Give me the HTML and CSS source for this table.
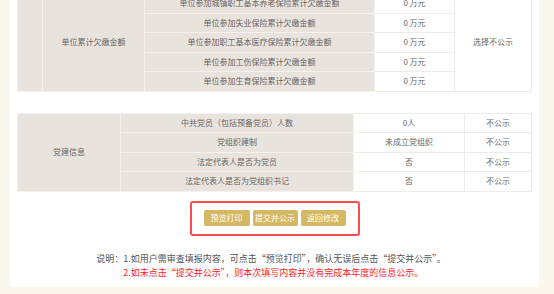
FILE: index.html
```html
<!DOCTYPE html>
<html lang="zh-CN">
<head>
<meta charset="utf-8">
<title>年度报告公示预览</title>
<link rel="stylesheet" href="styles.css">
</head>
<body>
<div class="panel">
  <table class="grid grid-arrears">
    <colgroup>
      <col class="c-blank"><col class="c-group"><col class="c-item"><col class="c-value"><col class="c-public">
    </colgroup>
    <tr>
      <td class="head" rowspan="5"></td>
      <td class="head" rowspan="5">单位累计欠缴金额</td>
      <td class="head">单位参加城镇职工基本养老保险累计欠缴金额</td>
      <td>0 万元</td>
      <td rowspan="5">选择不公示</td>
    </tr>
    <tr><td class="head">单位参加失业保险累计欠缴金额</td><td>0 万元</td></tr>
    <tr><td class="head">单位参加职工基本医疗保险累计欠缴金额</td><td>0 万元</td></tr>
    <tr><td class="head">单位参加工伤保险累计欠缴金额</td><td>0 万元</td></tr>
    <tr><td class="head">单位参加生育保险累计欠缴金额</td><td>0 万元</td></tr>
  </table>

  <table class="grid grid-party">
    <colgroup>
      <col class="p-group"><col class="p-item"><col class="p-value"><col class="p-public">
    </colgroup>
    <tr>
      <td class="head" rowspan="4">党建信息</td>
      <td class="head">中共党员（包括预备党员）人数</td>
      <td>0人</td>
      <td>不公示</td>
    </tr>
    <tr><td class="head">党组织建制</td><td>未成立党组织</td><td>不公示</td></tr>
    <tr><td class="head">法定代表人是否为党员</td><td>否</td><td>不公示</td></tr>
    <tr><td class="head">法定代表人是否为党组织书记</td><td>否</td><td>不公示</td></tr>
  </table>

  <div class="actions-wrap">
    <div class="actions">
      <button class="btn" type="button">预览打印</button>
      <button class="btn" type="button">提交并公示</button>
      <button class="btn" type="button">返回修改</button>
    </div>
  </div>

  <div class="note">
    <span class="note-label">说明：</span>
    <div class="note-lines">
      <p>1.如用户需审查填报内容，可点击“预览打印”，确认无误后点击“提交并公示”。</p>
      <p class="warn">2.如未点击“提交并公示”，则本次填写内容并没有完成本年度的信息公示。</p>
    </div>
  </div>
</div>
</body>
</html>
```

FILE: styles.css
```css
html, body {
  margin: 0;
  padding: 0;
  background: #f9f6ee;
  font-family: "Noto Sans CJK SC", "Noto Sans", sans-serif;
  overflow: hidden;
}

.panel {
  width: 529px;
  margin: -7px 0 0 10px;
  padding: 0 8px 7px 7px;
  box-sizing: border-box;
  background: #ffffff;
  border-radius: 0 0 4px 4px;
}

.grid {
  width: 514px;
  border-collapse: collapse;
  table-layout: fixed;
  font-size: 8px;
  color: #666666;
}

.grid td {
  height: 18.5px;
  padding: 0;
  border: 1px solid #efedea;
  text-align: center;
  vertical-align: middle;
  line-height: 10px;
  white-space: nowrap;
  background: #ffffff;
}

.grid td.head {
  background: #e9e3dd;
  border-color: #f4f1ee;
}

.c-blank { width: 25px; }
.c-group { width: 102px; }
.c-item { width: 230px; }
.c-value { width: 80px; }
.c-public { width: 77px; }

.grid-party { margin-top: 21px; }
.p-group { width: 103px; }
.p-item { width: 233px; }
.p-value { width: 111px; }
.p-public { width: 67px; }

.actions-wrap {
  display: flex;
  justify-content: center;
  margin-top: 9px;
  padding-left: 1px;
}

.actions {
  display: flex;
  gap: 3px;
  padding: 7px 12px 8px 12px;
  border: 2px solid #ff4a4f;
  border-radius: 3px;
}

.btn {
  width: 46px;
  height: 16px;
  padding: 0;
  border: none;
  border-radius: 2px;
  background: #d5b863;
  color: #ffffff;
  font-family: inherit;
  font-size: 8px;
  line-height: 16px;
  cursor: pointer;
}

.btn:nth-child(2) { width: 45px; }
.btn:nth-child(3) { width: 45px; }

.note {
  display: flex;
  justify-content: center;
  margin-top: 16px;
  padding-right: 6px;
  font-size: 9px;
  line-height: 14px;
  color: #555555;
}

.note-label { white-space: nowrap; }

.note-lines p {
  margin: 0;
  white-space: nowrap;
}

.note-lines .warn { color: #ff2222; }
```
